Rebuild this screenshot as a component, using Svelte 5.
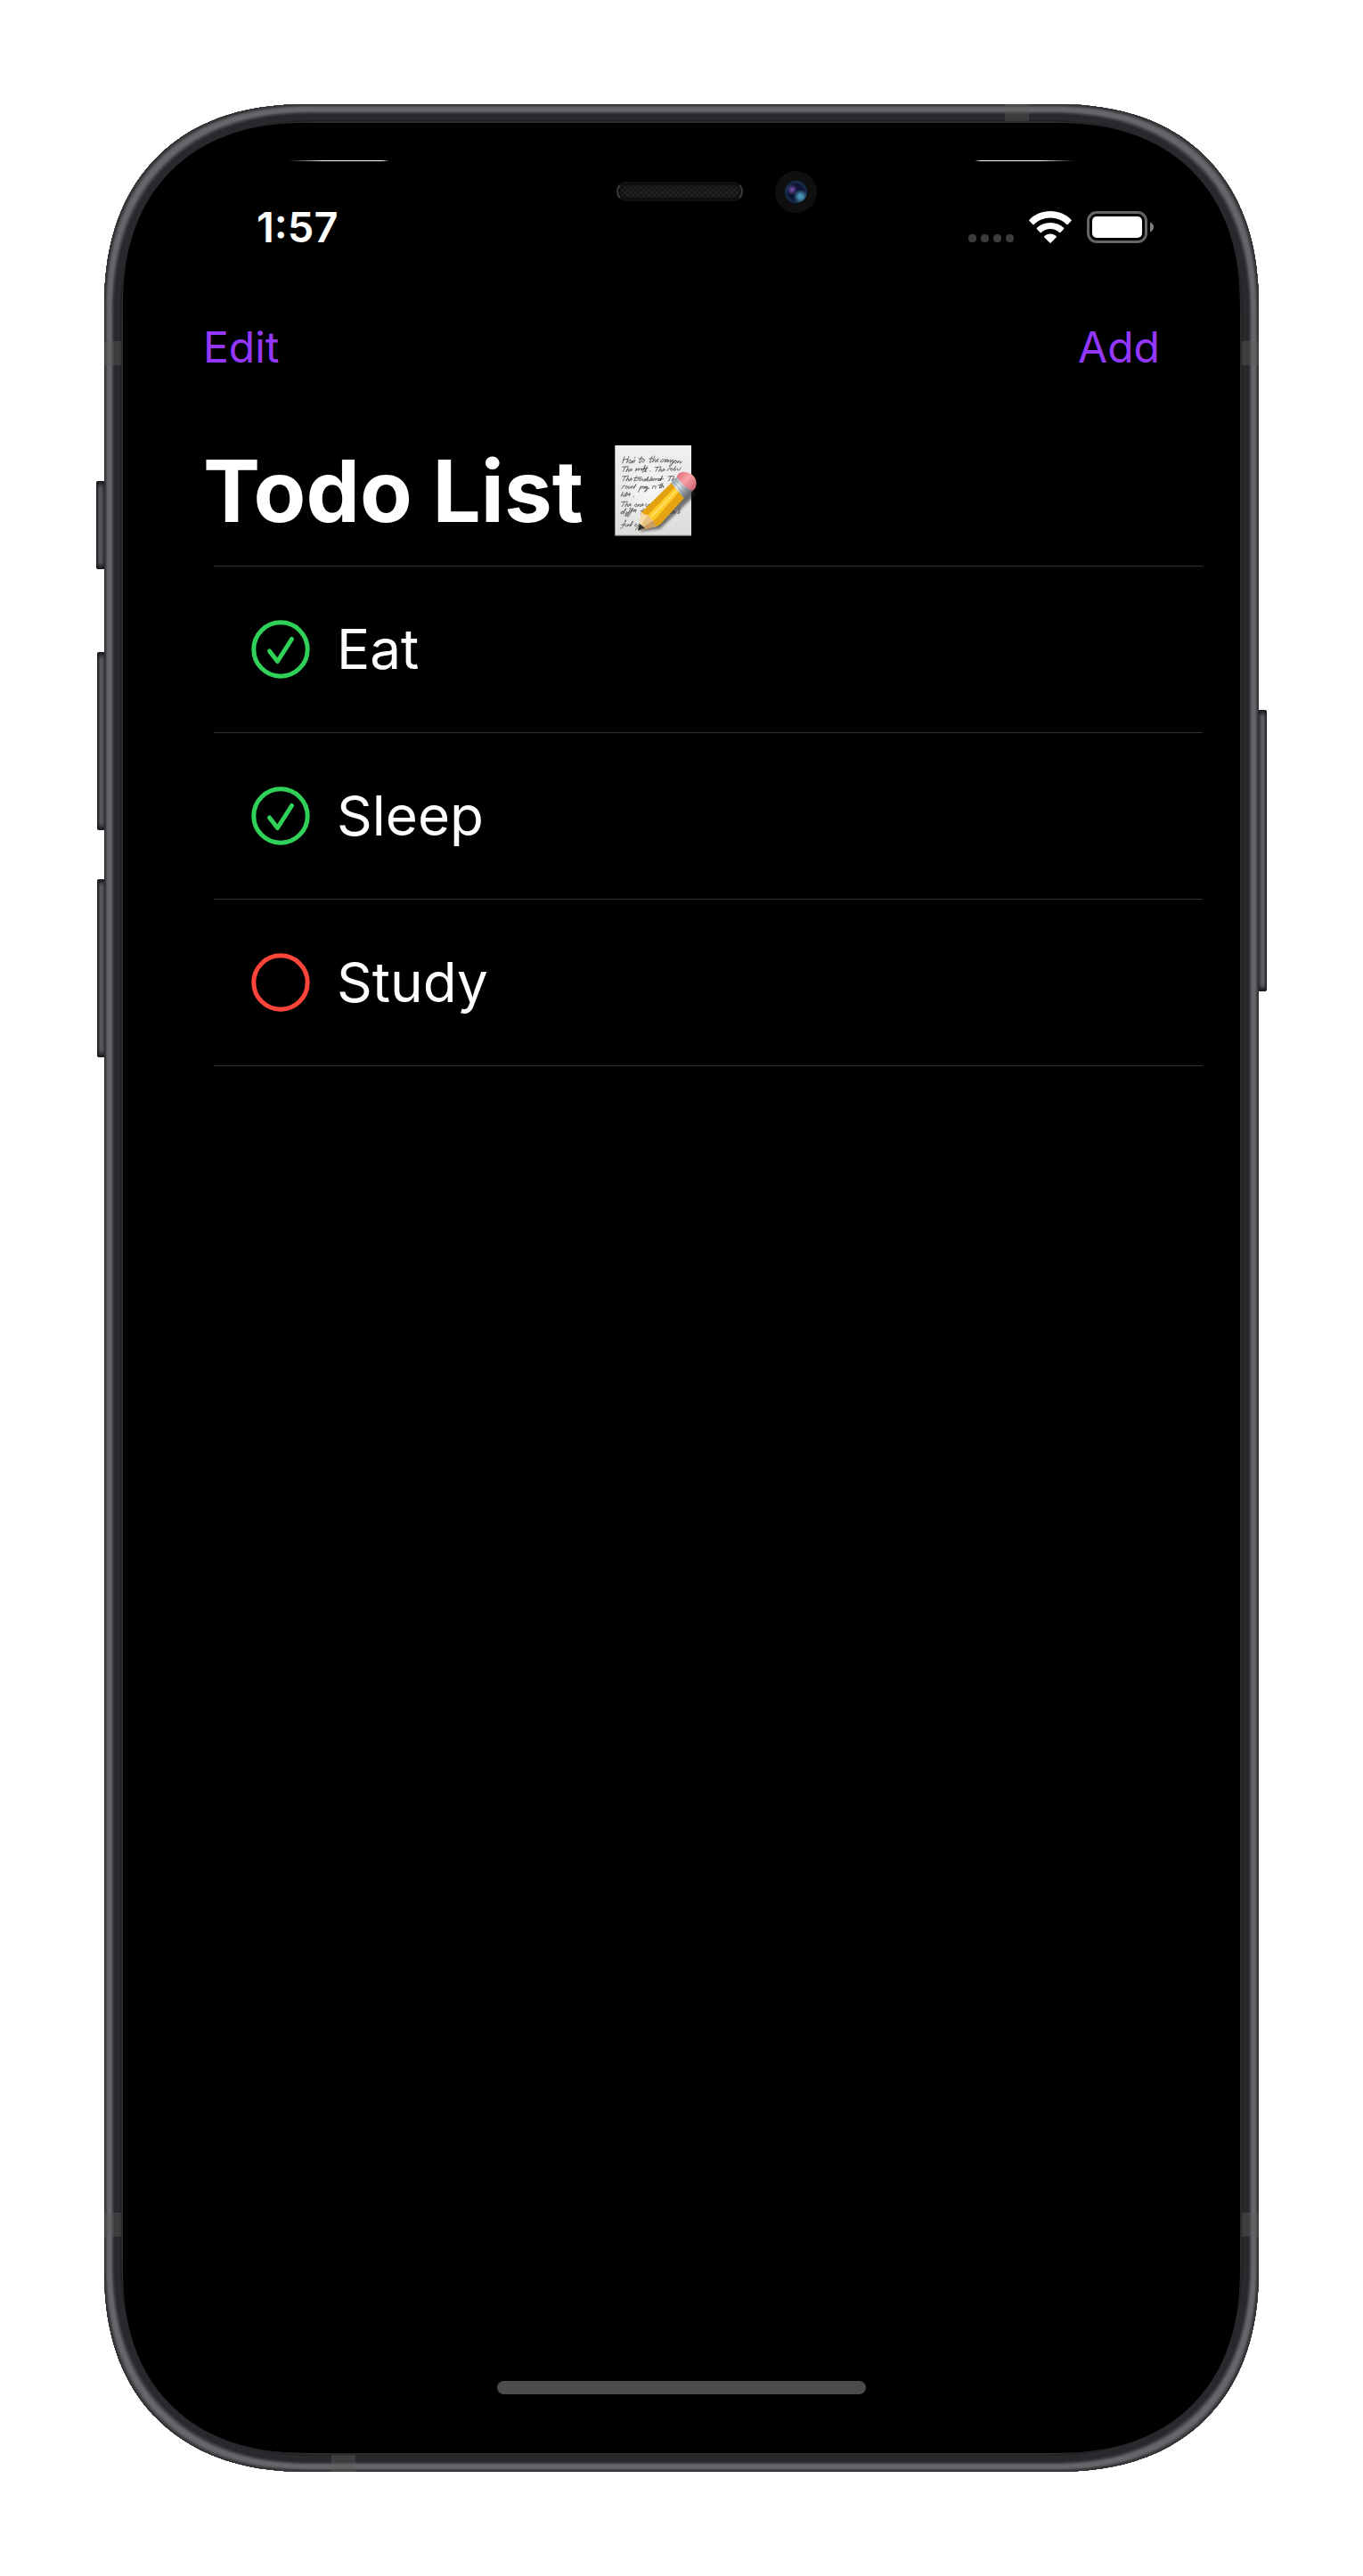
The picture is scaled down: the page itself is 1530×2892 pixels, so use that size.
<script>
  let todos = $state([
    { id: 1, title: 'Eat', done: true },
    { id: 2, title: 'Sleep', done: true },
    { id: 3, title: 'Study', done: false }
  ]);
</script>

<main class="stage">
  <div class="phone">
    <span class="key mute"></span>
    <span class="key volume-up"></span>
    <span class="key volume-down"></span>
    <span class="key power"></span>

    <div class="frame">
      <span class="band side-left upper"></span>
      <span class="band side-right upper"></span>
      <span class="band side-left lower"></span>
      <span class="band side-right lower"></span>
      <span class="band edge-top"></span>
      <span class="band edge-bottom"></span>

      <div class="screen">
        <span class="glint glint-left"></span>
        <span class="glint glint-right"></span>
        <span class="speaker"></span>
        <span class="camera"><span class="lens"></span></span>

        <div class="status">
          <time>1:57</time>
          <div class="indicators">
            <svg width="51" height="36" viewBox="0 0 51 36" aria-hidden="true">
              <g fill="#3c3c3c">
                <rect x="0" y="26" width="9" height="9" rx="4" />
                <rect x="14" y="26" width="9" height="9" rx="4" />
                <rect x="28" y="26" width="9" height="9" rx="4" />
                <rect x="42" y="26" width="9" height="9" rx="4" />
              </g>
            </svg>
            <svg width="48" height="36" viewBox="0 0 48 36" aria-hidden="true">
              <g fill="#fff">
                <path d="M24 0C14.700 0 6.300 3.600 .5 9.700a1 1 0 0 0 0 1.400l3.800 3.900a1 1 0 0 0 1.400 0C10.500 10.500 16.900 7.600 24 7.600s13.500 2.900 18.300 7.400a1 1 0 0 0 1.400 0l3.800-3.900a1 1 0 0 0 0-1.400C41.700 3.600 33.300 0 24 0z" />
                <path d="M24 13c-5.800 0-11.100 2.200-15 5.800a1 1 0 0 0 0 1.400l3.600 3.700a1 1 0 0 0 1.400 0c2.700-2.400 6.200-3.800 10-3.800s7.300 1.400 10 3.800a1 1 0 0 0 1.400 0l3.600-3.700a1 1 0 0 0 0-1.400C35.100 15.200 29.800 13 24 13z" />
                <path d="M24 25.500c-2.500 0-4.800.9-6.600 2.400a1 1 0 0 0 0 1.500l5.900 6a1 1 0 0 0 1.400 0l5.900-6a1 1 0 0 0 0-1.500c-1.800-1.500-4.100-2.400-6.600-2.400z" />
              </g>
            </svg>
            <svg width="75" height="36" viewBox="0 0 75 36" aria-hidden="true">
              <rect x="1.500" y="1.500" width="65" height="33" rx="9.500" fill="none" stroke="#666" stroke-width="3" />
              <rect x="6" y="6" width="56" height="24" rx="5" fill="#fff" />
              <path d="M71 12.500c2.500 1 4 3.100 4 5.500s-1.500 4.500-4 5.500z" fill="#808080" />
            </svg>
          </div>
        </div>

        <nav class="actions">
          <button type="button">Edit</button>
          <button type="button">Add</button>
        </nav>

        <h1>
          Todo List
          <svg class="memo" width="112" height="118" viewBox="0 0 336 354" role="img" aria-label="Memo">
            <defs>
              <linearGradient id="paper" x1="0" y1="0" x2="0" y2="1">
                <stop offset="0" stop-color="#f0f0f0" />
                <stop offset="1" stop-color="#dcdcdb" />
              </linearGradient>
              <radialGradient id="paper-light">
                <stop offset="0" stop-color="#fff" stop-opacity=".7" />
                <stop offset="1" stop-color="#fff" stop-opacity="0" />
              </radialGradient>
              <linearGradient id="ferrule" x1="222" y1="140" x2="280" y2="195" gradientUnits="userSpaceOnUse">
                <stop offset="0" stop-color="#8899a5" />
                <stop offset=".35" stop-color="#e2e8ec" />
                <stop offset=".65" stop-color="#9ba4ab" />
                <stop offset="1" stop-color="#5b5a60" />
              </linearGradient>
              <linearGradient id="eraser" x1="245" y1="120" x2="300" y2="170" gradientUnits="userSpaceOnUse">
                <stop offset="0" stop-color="#e4747e" />
                <stop offset=".4" stop-color="#f7a3a9" />
                <stop offset="1" stop-color="#cf606c" />
              </linearGradient>
              <filter id="soft" x="-20%" y="-20%" width="140%" height="140%">
                <feGaussianBlur stdDeviation="5" />
              </filter>
            </defs>
            <rect x="28" y="24" width="257" height="304" fill="url(#paper)" />
            <ellipse cx="150" cy="185" rx="125" ry="145" fill="url(#paper-light)" />
            <path d="M28 326.500H285" stroke="#b4b4b4" stroke-width="3" />
            <g fill="none" stroke="#55565a" stroke-width="2.500" stroke-linecap="round" stroke-linejoin="round">
              <path d="M60 62l-7 22m2-10q9-5 16-4m4-9l-8 22q5-6 8-8c6-5 9 0 4 4q-6 3-3 5 5 2 11-9l-3 9q3 0 6-7t5-3l-3 8m3-18l-1 3M118 62l-9 20q1 3 6-2m-7-11l14-1m3 3c-7-2-9 10-3 10 7-1 9-11 2-10M153 61l-8 20q3 3 6-2m-8-10l13-1m6-8l-8 21q9-14 12-9l-3 8q5 1 8-5c7-5 3-8 0-4q-5 7 2 9M194 72q-8-4-12 4c-2 6 4 7 9 0m7-5l-3 10q9-13 11-8c1 4-7 10-7 4q4-9 9-3l-2 7q7-10 11-7l-3 8 9-10q2 9-4 18-8 9-8 3 6-9 19-16m3-2c-7-2-8 10-2 9 7-2 7-9 2-9m8 1l-3 8q8-11 10-6l-2 6q5 0 8-5" />
              <path d="M53 97l19-2m-9 1l-8 16m18-15l-8 16q7-13 10-8l-2 7q7-1 10-6c3-6-4-5-4 1q1 5 7 0M96 111l5-10q0 6-1 8 7-10 9-7l-2 7q7-11 12-6l-3 6q6-2 8-8m2-4q6-12 3-2l-8 20m-4-11l14-1m-5 9q4 0 6-8m5-9l-8 18q3 2 6-2m-8-9l11-1m9 10v1M163 98l19-2m-9 1l-8 15m18-14l-8 15q7-12 10-7l-2 6q7-1 10-6c3-5-4-5-4 1q1 5 7 0M204 110l5-8q5-5 7 0m3-1c-6 0-6 9-1 8 7-2 6-8 1-8m14-7l-8 14c9 3 12-7 4-6m9 0q-1 9 7 5l5-8" />
              <path d="M53 129l19-2m-9 1l-8 16m18-15l-8 15q7-12 10-7l-2 7q7-1 10-6c3-6-4-5-4 1q1 5 7 0M101 128l-9 16q2 2 6-2m-6-8l26-3M101 143q6-12 10-7m3 0c-7 0-7 8-1 7 7-2 6-7 1-7m8 0q-5 8 0 8t9-9l-3 9q5-2 8-8l5-7-7 15c9 2 11-7 4-7m14-7l-8 14q4 1 7-5c6-5 2-5 0-1-2 6 3 6 6 1m2-4l-3 8q8-12 10-6l-2 6q9-12 11-6l-2 6q6 0 9-6-7-2-8 3c0 6 8 0 9-4l-2 7 7-17-7 15q7-5 10-5M207 129l19-2m-9 1l-8 16m18-15l-8 15q7-10 10-7" />
              <path d="M51 170l5-9q5-5 7 0m5 0c-6 0-6 9-1 8 7-2 6-8 1-8m7 1q-5 8 0 7t9-8l-3 8q8-11 10-6l-2 6q4 0 10-14l-7 13M115 162l-8 19m8-18q11-3 6 4-5 4-9 1m18-5q-8-3-8 3c1 6 7 0 9-3l-3 6q5-2 8-6-6-2-6 3 5 6 8-3l-5 15q-7 5-5-1 8-7 15-9M157 161l-3 8m3-8l3 1q5-4 6 0l-2 7m20-17l-7 16q4 1 7-4m-10-6l13-1m2-5l-7 16q7-12 10-7l-2 6M55 181l-7 15q8-11 10-6l-2 6q7-1 10-5m3-10l-7 14q4 2 8-4m-8-4l10-1q-2 8 5 4 6-5 0-5-4 3 2 6l-4 3M91 197l1 0" />
              <path d="M50 215l19-2m-9 1l-8 16m18-15l-8 15q7-12 10-7l-2 7q7-1 10-6c3-6-4-5-4 1q1 5 7 0M99 222c-6 0-6 9-1 8 7-2 6-8 1-8m8 1l-3 7q8-11 10-6l-2 6q7-1 10-6c3-5-4-5-4 1q1 5 7 0M133 221q-4 9 1 9t9-9q-3 10 3 8t8-8m3 0l-3 8M56 246q-10 1-9 7 6 4 13-9l5-8-9 20m12-9l-4 9m14-19q9-9-2 9-9 17-13 18-3-3 8-14m14-11q9-11-2 7-8 19-13 19-4-3 11-19m4-3c6-5-1-5-2 0-1 6 6 3 8-2l4-1-4 8q7-12 9-7l-3 8M124 237l-8 18m-2-10l13-1M217 246c-6 0-6 9-1 8m9-9l-4 9q8-11 10-7l-2 7m19-17l-8 17q5 0 8-5" />
              <path d="M61 277q8-5 0 7-9 22-14 21m2-13l11-2m4-1q-5 8 0 8t9-7l-3 7q8-11 10-6l-2 6q4-1 10-18l-7 17m18-7c-6 0-6 9-1 8 7-2 6-8 1-8m13-8q9-5-2 8-8 16-13 20" />
            </g>
            <path d="M112 315L180 305 300 190 285 168 150 250z" fill="#222" opacity=".6" filter="url(#soft)" />
            <path d="M117 249L133 236 180 274 168 297 105 311z" fill="#e9c083" />
            <path d="M117 249l23 7-35 55z" fill="#f6d9a4" />
            <path d="M158 276l22-3-12 24-63 14z" fill="#cc9d60" />
            <path d="M117 249L218 150 237 165 143 257Q129 262 117 249z" fill="#e2a20f" />
            <path d="M140 257L234 161 251 179 160 278Q150 278 140 257z" fill="#ffcb28" />
            <path d="M150 265L241 170" stroke="#ffe174" stroke-width="5" />
            <path d="M158 278L248 176 264 198 180 290 168 297Q158 290 158 278z" fill="#e5a314" />
            <path d="M105 311L110 287 129 303z" fill="#2d3134" />
            <path d="M217 151L237 130 291 176 264 206z" fill="url(#ferrule)" />
            <path d="M223 145l47 54M230 138l51 49" stroke="#636f79" stroke-width="2.500" opacity=".6" />
            <path d="M236 130Q241 113 260 113 300 118 302 151 301 171 290 176 259 167 236 130z" fill="url(#eraser)" />
          </svg>
        </h1>

        <ul class="todos">
          {#each todos as todo (todo.id)}
            <li>
              <label class:done={todo.done}>
                <input type="checkbox" bind:checked={todo.done} />
                <svg width="66" height="66" viewBox="0 0 66 66" aria-hidden="true">
                  <circle cx="33" cy="33" r="30.200" />
                  {#if todo.done}
                    <path d="M20.500 35l9 11.500L45.500 21.500" />
                  {/if}
                </svg>
                <span>{todo.title}</span>
              </label>
            </li>
          {/each}
        </ul>

        <span class="home"></span>
      </div>
    </div>
  </div>
</main>

<style>
  :global(body) {
    margin: 0;
    background: #fff;
  }

  .stage {
    box-sizing: border-box;
    display: flex;
    min-height: 100vh;
    padding: 117px;
    color: #fff;
    font-family: Inter, "Liberation Sans", sans-serif;
  }

  .phone {
    position: relative;
    display: flex;
    flex: 1;
  }

  /* Metal rim: concentric insets from the outer edge to the glass */
  .frame {
    position: relative;
    display: flex;
    flex: 1;
    padding: 21px;
    border-radius: 200px;
    background: #29292e;
    box-shadow:
      inset 0 0 0 1px #303032,
      inset 0 0 0 2px #3d3d40,
      inset 0 0 0 3px #4c4c50,
      inset 0 0 0 4px #5c5c60,
      inset 0 0 0 8px #66656a,
      inset 0 0 0 9px #55545a,
      inset 0 0 0 10px #434348,
      inset 0 0 0 11px #36363b,
      inset 0 0 0 18px #28282d,
      inset 0 0 0 19px #1f1f21,
      inset 0 0 0 21px #2b2b2a;
  }

  .screen {
    position: relative;
    display: flex;
    flex: 1;
    flex-direction: column;
    border-radius: 179px;
    background: #000;
  }

  @supports (corner-shape: squircle) {
    .frame {
      border-radius: 228px;
      corner-shape: superellipse(1.2);
    }

    .screen {
      border-radius: 207px;
      corner-shape: superellipse(1.2);
    }
  }

  .key {
    position: absolute;
    left: -8px;
    width: 10px;
    border-radius: 3px;
    background: linear-gradient(90deg, #2c2c34, #5c5c62 35%, #48484d);
    box-shadow: inset 0 0 0 1px #22222a, inset 0 4px 4px #18181c, inset 0 -4px 4px #18181c;
  }

  .mute {
    top: 423px;
    left: -9px;
    height: 99px;
  }

  .volume-up {
    top: 615px;
    height: 200px;
  }

  .volume-down {
    top: 870px;
    height: 200px;
  }

  .power {
    top: 680px;
    right: -9px;
    left: auto;
    height: 316px;
    background: linear-gradient(270deg, #2c2c34, #66656a 35%, #48484d);
  }

  .band {
    position: absolute;
    background: #5c5c5c;
    opacity: 0.4;
  }

  .side-left,
  .side-right {
    width: 19px;
    height: 27px;
  }

  .side-left {
    left: 0;
  }

  .side-right {
    right: 0;
  }

  .upper {
    top: 266px;
  }

  .lower {
    bottom: 264px;
  }

  .edge-top,
  .edge-bottom {
    width: 27px;
    height: 19px;
  }

  .edge-top {
    top: 0;
    right: 258px;
  }

  .edge-bottom {
    bottom: 0;
    left: 255px;
  }

  .glint {
    position: absolute;
    top: 42px;
    width: 112px;
    height: 1px;
  }

  .glint-left {
    left: 186px;
    background: linear-gradient(90deg, #000, #fff 35%, #fff 94%, #000);
  }

  .glint-right {
    right: 186px;
    background: linear-gradient(270deg, #000, #fff 35%, #fff 94%, #000);
  }

  .speaker {
    position: absolute;
    top: 66px;
    left: calc(50% - 73px);
    box-sizing: border-box;
    width: 142px;
    height: 22px;
    border: 2px solid #121212;
    border-right-color: #3a3a3a;
    border-left-color: #3a3a3a;
    border-radius: 11px;
    background: repeating-conic-gradient(#202020 0 25%, #161616 0 50%) 0 0 / 6px 6px;
    box-shadow: inset 0 0 3px 1px #000;
  }

  .camera {
    position: absolute;
    top: 54px;
    left: calc(50% + 105px);
    display: grid;
    place-items: center;
    width: 47px;
    height: 47px;
    border-radius: 50%;
    background: #0f0f10;
  }

  .lens {
    width: 25px;
    height: 25px;
    border-radius: 50%;
    background:
      radial-gradient(circle at 32% 40%, #7d54b4 0, transparent 26%),
      radial-gradient(circle at 70% 70%, #4b94b8 0 8%, transparent 32%),
      radial-gradient(circle, #0c1430 45%, #28547e);
  }

  .status {
    display: flex;
    align-items: center;
    justify-content: space-between;
    height: 54px;
    margin-top: 90px;
    padding: 0 97px 0 150px;
  }

  time {
    font-size: 47px;
    font-weight: 600;
    line-height: 54px;
  }

  .indicators {
    display: flex;
    align-items: center;
    gap: 17px;
  }

  .actions {
    display: flex;
    justify-content: space-between;
    margin-top: 78px;
    padding: 0 90px;
  }

  button {
    padding: 0;
    border: 0;
    background: none;
    color: #9437ff;
    font: 400 48px/60px Inter, "Liberation Sans", sans-serif;
    cursor: pointer;
  }

  h1 {
    display: flex;
    align-items: center;
    gap: 26px;
    margin: 71px 0 24px;
    padding: 0 90px;
    font-size: 96px;
    font-weight: 700;
    line-height: 120px;
  }

  .todos {
    margin: 0 42px 0 102px;
    padding: 0;
    border-top: 1px solid #303030;
    list-style: none;
  }

  li {
    border-bottom: 1px solid #303030;
  }

  label {
    position: relative;
    display: flex;
    align-items: center;
    gap: 30px;
    height: 186px;
    padding-left: 42px;
    color: #ff453a;
    font-size: 62px;
    line-height: 80px;
    cursor: pointer;
  }

  label.done {
    color: #30d158;
  }

  label span {
    color: #fff;
  }

  label svg {
    fill: none;
    stroke: currentColor;
    stroke-width: 5;
    stroke-linecap: round;
    stroke-linejoin: round;
  }

  input {
    position: absolute;
    left: 42px;
    width: 66px;
    height: 66px;
    margin: 0;
    opacity: 0;
  }

  .home {
    width: 33%;
    height: 15px;
    margin: auto auto 66px;
    border-radius: 8px;
    background: #4c4c4c;
  }
</style>
